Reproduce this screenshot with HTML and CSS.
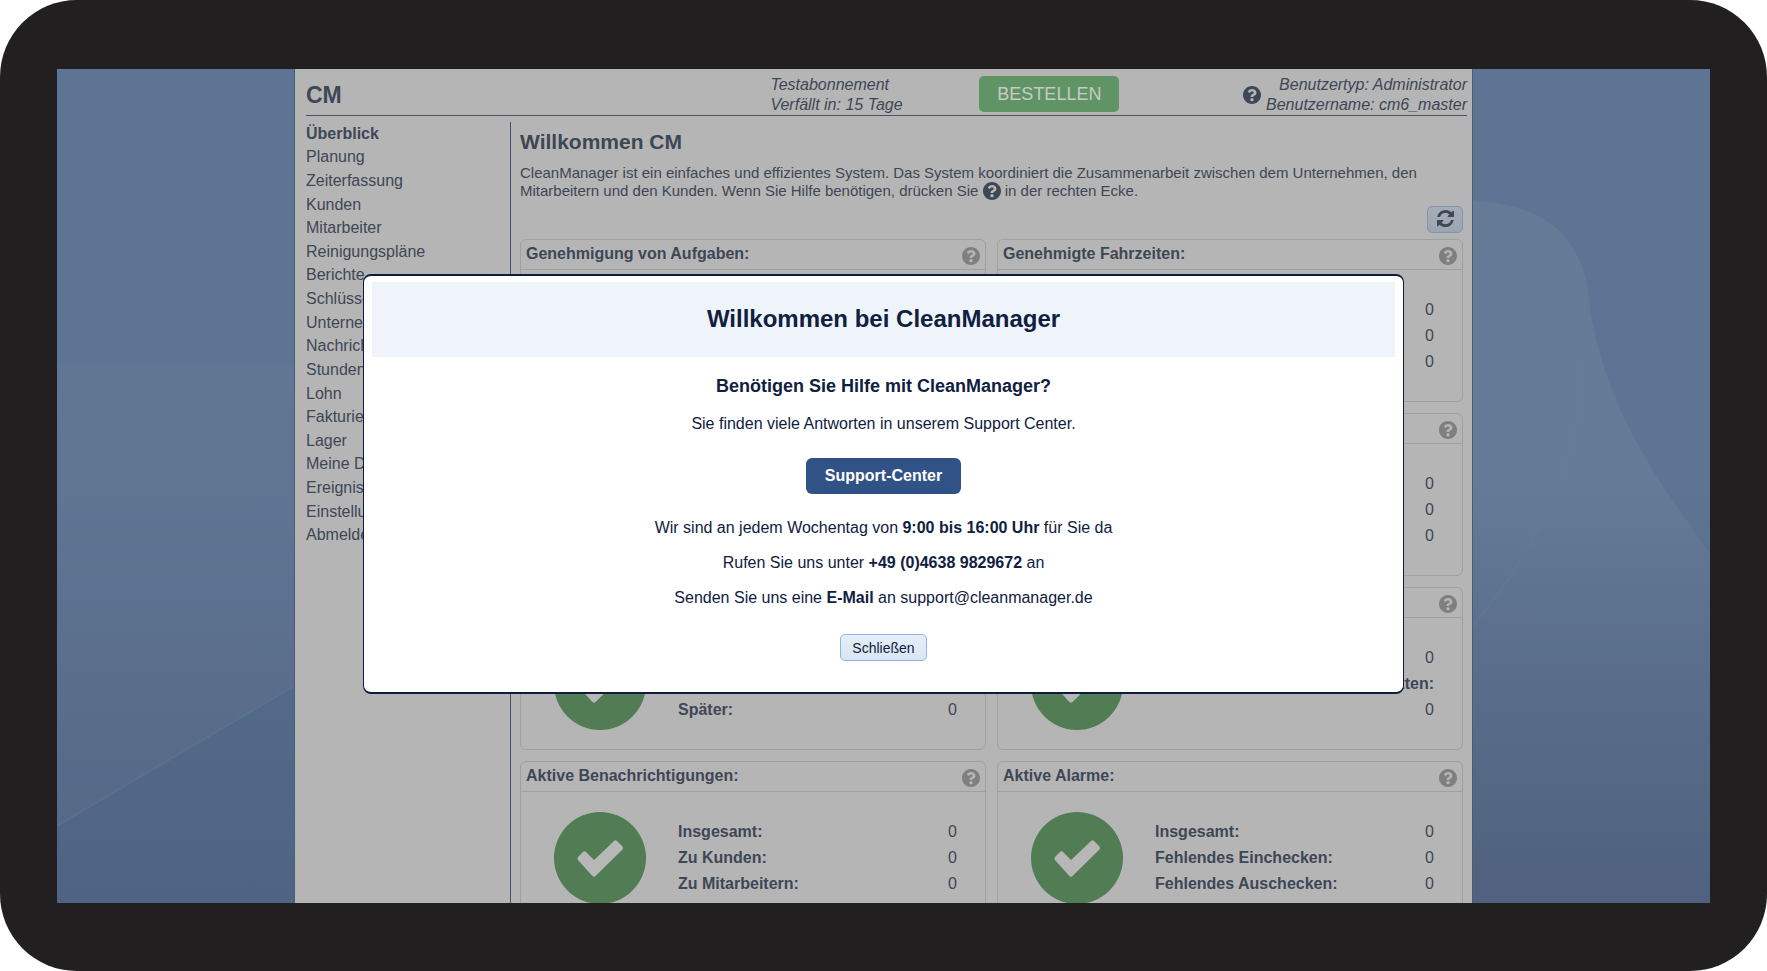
FILE: index.html
```html
<!DOCTYPE html>
<html lang="de">
<head>
    <meta charset="UTF-8">
    <meta name="viewport" content="width=device-width, initial-scale=1.0">
    <title>CleanManager</title>
    <link rel="stylesheet" href="styles.css">
</head>
<body>
    <!-- Icons -->
    <svg class="sprite" aria-hidden="true">
        <symbol id="icon-help" viewBox="8 8 496 496">
            <path d="M504 256c0 136.997-111.043 248-248 248S8 392.997 8 256C8 119.083 119.043 8 256 8s248 111.083 248 248zM262.655 90c-54.497 0-89.255 22.957-116.549 63.758-3.536 5.286-2.353 12.415 2.715 16.258l34.699 26.31c5.205 3.947 12.621 3.008 16.665-2.122 17.864-22.658 30.113-35.797 57.303-35.797 20.429 0 45.698 13.148 45.698 32.958 0 14.976-12.363 22.667-32.534 33.976C247.128 238.528 216 254.941 216 296v4c0 6.627 5.373 12 12 12h56c6.627 0 12-5.373 12-12v-1.333c0-28.462 83.186-29.647 83.186-106.667 0-58.002-60.165-102-116.531-102zM256 338c-25.365 0-46 20.635-46 46 0 25.364 20.635 46 46 46s46-20.636 46-46c0-25.365-20.635-46-46-46z"/>
        </symbol>
        <symbol id="icon-refresh" viewBox="0 0 1536 1536">
            <path d="M1511 928q0 5-1 7-64 268-268 434.5t-478 166.5q-146 0-282.5-55t-243.5-157l-129 129q-19 19-45 19t-45-19-19-45v-448q0-26 19-45t45-19h448q26 0 45 19t19 45-19 45l-137 137q71 66 161 102t187 36q134 0 250-65t186-179q11-17 53-117 8-23 30-23h192q13 0 22.5 9.5t9.5 22.5zm25-800v448q0 26-19 45t-45 19h-448q-26 0-45-19t-19-45 19-45l138-138q-148-137-349-137-134 0-250 65t-186 179q-11 17-53 117-8 23-30 23h-199q-13 0-22.5-9.5t-9.5-22.5v-7q65-268 270-434.5t480-166.5q146 0 284 55.5t245 156.5l130-129q19-19 45-19t45 19 19 45z"/>
        </symbol>
        <symbol id="icon-check" viewBox="0 0 92 92">
            <circle cx="46" cy="46" r="46"/>
            <path d="M26 46.500L30.500 42L40 51.500L61.500 31L66.500 36L40 62Z" fill="#b7b7b7" stroke="#b7b7b7" stroke-width="5" stroke-linejoin="round"/>
        </symbol>
    </svg>

    <div class="device">
        <div class="screen">
            <svg class="wallpaper" viewBox="0 0 1653 833" preserveAspectRatio="none" aria-hidden="true">
                <defs>
                    <linearGradient id="fold" x1="0" y1="0" x2="0" y2="1">
                        <stop offset="0" stop-color="#6d8099" stop-opacity=".55"/>
                        <stop offset=".4" stop-color="#6a7f9a" stop-opacity=".6"/>
                        <stop offset="1" stop-color="#52657f" stop-opacity="0"/>
                    </linearGradient>
                    <linearGradient id="base" x1="0" y1="0" x2="0" y2="1">
                        <stop offset="0" stop-color="#637892" stop-opacity=".5"/>
                        <stop offset="1" stop-color="#5c7090" stop-opacity=".4"/>
                    </linearGradient>
                </defs>
                <path d="M0 296H238V616L0 756Z" fill="url(#base)"/>
                <path d="M0 756L238 616V833H0Z" fill="#506888" fill-opacity=".55"/>
                <path d="M0 756L238 616" stroke="#6c819c" stroke-opacity=".3" stroke-width="2"/>
                <path d="M1400 130C1470 133 1528 150 1533 241C1548 330 1590 400 1653 483V833H1400Z" fill="url(#fold)"/>
                <path d="M1416 556C1480 480 1520 400 1527 290" fill="none" stroke="#71849c" stroke-opacity=".2" stroke-width="2"/>
            </svg>

            <div class="app">
                <header class="topbar">
                    <div class="brand">CM</div>
                    <div class="trial">Testabonnement<br>Verfällt in: 15 Tage</div>
                    <button class="order" type="button">BESTELLEN</button>
                    <div class="user">
                        <svg class="icon"><use href="#icon-help"/></svg>
                        <div>Benutzertyp: Administrator<br>Benutzername: cm6_master</div>
                    </div>
                </header>

                <div class="columns">
                    <nav class="menu">
                        <a class="active" href="#">Überblick</a>
                        <a href="#">Planung</a>
                        <a href="#">Zeiterfassung</a>
                        <a href="#">Kunden</a>
                        <a href="#">Mitarbeiter</a>
                        <a href="#">Reinigungspläne</a>
                        <a href="#">Berichte</a>
                        <a href="#">Schlüssel</a>
                        <a href="#">Unternehmen</a>
                        <a href="#">Nachrichten</a>
                        <a href="#">Stundenzettel</a>
                        <a href="#">Lohn</a>
                        <a href="#">Fakturierung</a>
                        <a href="#">Lager</a>
                        <a href="#">Meine Daten</a>
                        <a href="#">Ereignisse</a>
                        <a href="#">Einstellungen</a>
                        <a href="#">Abmelden</a>
                    </nav>

                    <main class="content">
                        <h1>Willkommen CM</h1>
                        <p class="intro">CleanManager ist ein einfaches und effizientes System. Das System koordiniert die Zusammenarbeit zwischen dem Unternehmen, den Mitarbeitern und den Kunden. Wenn Sie Hilfe benötigen, drücken Sie <svg class="icon"><use href="#icon-help"/></svg> in der rechten Ecke.</p>
                        <div class="toolbar">
                            <button class="refresh" type="button" aria-label="Aktualisieren"><svg><use href="#icon-refresh"/></svg></button>
                        </div>

                        <div class="cards">
                            <section class="card">
                                <h2>Genehmigung von Aufgaben: <svg class="icon"><use href="#icon-help"/></svg></h2>
                                <div class="card-body">
                                    <svg class="check"><use href="#icon-check"/></svg>
                                    <dl>
                                        <div><dt>Heute:</dt><dd>0</dd></div>
                                        <div><dt>Gestern:</dt><dd>0</dd></div>
                                        <div><dt>Früher:</dt><dd>0</dd></div>
                                    </dl>
                                </div>
                            </section>
                            <section class="card">
                                <h2>Genehmigte Fahrzeiten: <svg class="icon"><use href="#icon-help"/></svg></h2>
                                <div class="card-body">
                                    <svg class="check"><use href="#icon-check"/></svg>
                                    <dl>
                                        <div><dt>Heute:</dt><dd>0</dd></div>
                                        <div><dt>Gestern:</dt><dd>0</dd></div>
                                        <div><dt>Früher:</dt><dd>0</dd></div>
                                    </dl>
                                </div>
                            </section>
                            <section class="card">
                                <h2>Aufgaben: <svg class="icon"><use href="#icon-help"/></svg></h2>
                                <div class="card-body">
                                    <svg class="check"><use href="#icon-check"/></svg>
                                    <dl>
                                        <div><dt>Heute:</dt><dd>0</dd></div>
                                        <div><dt>Morgen:</dt><dd>0</dd></div>
                                        <div><dt>Später:</dt><dd>0</dd></div>
                                    </dl>
                                </div>
                            </section>
                            <section class="card">
                                <h2>Abwesenheit: <svg class="icon"><use href="#icon-help"/></svg></h2>
                                <div class="card-body">
                                    <svg class="check"><use href="#icon-check"/></svg>
                                    <dl>
                                        <div><dt>Heute:</dt><dd>0</dd></div>
                                        <div><dt>Morgen:</dt><dd>0</dd></div>
                                        <div><dt>Später:</dt><dd>0</dd></div>
                                    </dl>
                                </div>
                            </section>
                            <section class="card">
                                <h2>Termine: <svg class="icon"><use href="#icon-help"/></svg></h2>
                                <div class="card-body">
                                    <svg class="check"><use href="#icon-check"/></svg>
                                    <dl>
                                        <div><dt>Heute:</dt><dd>0</dd></div>
                                        <div><dt>Morgen:</dt><dd>0</dd></div>
                                        <div><dt>Später:</dt><dd>0</dd></div>
                                    </dl>
                                </div>
                            </section>
                            <section class="card">
                                <h2>Fristen: <svg class="icon"><use href="#icon-help"/></svg></h2>
                                <div class="card-body">
                                    <svg class="check"><use href="#icon-check"/></svg>
                                    <dl>
                                        <div><dt></dt><dd>0</dd></div>
                                        <div class="wide"><dt>Frist überschritten:</dt></div>
                                        <div><dt></dt><dd>0</dd></div>
                                    </dl>
                                </div>
                            </section>
                            <section class="card">
                                <h2>Aktive Benachrichtigungen: <svg class="icon"><use href="#icon-help"/></svg></h2>
                                <div class="card-body">
                                    <svg class="check"><use href="#icon-check"/></svg>
                                    <dl>
                                        <div><dt>Insgesamt:</dt><dd>0</dd></div>
                                        <div><dt>Zu Kunden:</dt><dd>0</dd></div>
                                        <div><dt>Zu Mitarbeitern:</dt><dd>0</dd></div>
                                    </dl>
                                </div>
                            </section>
                            <section class="card">
                                <h2>Aktive Alarme: <svg class="icon"><use href="#icon-help"/></svg></h2>
                                <div class="card-body">
                                    <svg class="check"><use href="#icon-check"/></svg>
                                    <dl>
                                        <div><dt>Insgesamt:</dt><dd>0</dd></div>
                                        <div><dt>Fehlendes Einchecken:</dt><dd>0</dd></div>
                                        <div><dt>Fehlendes Auschecken:</dt><dd>0</dd></div>
                                    </dl>
                                </div>
                            </section>
                        </div>
                    </main>
                </div>
            </div>

            <div class="overlay">
                <div class="modal" role="dialog" aria-labelledby="modal-title">
                    <h2 class="modal-title" id="modal-title">Willkommen bei CleanManager</h2>
                    <div class="modal-body">
                        <h3>Benötigen Sie Hilfe mit CleanManager?</h3>
                        <p>Sie finden viele Antworten in unserem Support Center.</p>
                        <a class="support" href="#">Support-Center</a>
                        <p>Wir sind an jedem Wochentag von <b>9:00 bis 16:00 Uhr</b> für Sie da</p>
                        <p>Rufen Sie uns unter <b>+49 (0)4638 9829672</b> an</p>
                        <p>Senden Sie uns eine <b>E-Mail</b> an support@cleanmanager.de</p>
                        <button class="close" type="button">Schließen</button>
                    </div>
                </div>
            </div>
        </div>
    </div>
</body>
</html>
```

FILE: styles.css
```css
* {
    box-sizing: border-box;
}
body {
    margin: 0;
    background-color: #fff;
    color: #3d4756;
    font-family: "Liberation Sans", Arial, sans-serif;
    font-size: 16px;
    line-height: 20px;
}
h1, h2, h3, p, dl, dd {
    margin: 0;
}
.sprite {
    display: none;
}

/* Tablet */
.device {
    height: 100vh;
    padding: 69px 57px 68px;
    background-color: #221f20;
    border-radius: 77px;
}
.screen {
    position: relative;
    height: 100%;
    overflow: hidden;
    background: linear-gradient(to bottom, #5d7494, #5e7493 50%, #4f617e);
}
.wallpaper {
    position: absolute;
    width: 100%;
    height: 100%;
}

/* App */
.app {
    position: relative;
    display: flex;
    flex-direction: column;
    max-width: 1179px;
    height: 100%;
    margin: 0 auto;
    padding: 0 5px 0 11px;
    background-color: #b5b5b5;
    border-left: 1px solid #4d5b70;
    border-right: 1px solid #4d5b70;
}
.topbar {
    display: grid;
    grid-template-columns: 40% 18% 1fr auto;
    align-items: center;
    height: 47px;
    padding-top: 6px;
    border-bottom: 1px solid #4a5466;
}
.brand {
    font-size: 23px;
    font-weight: bold;
}
.trial, .user {
    font-style: italic;
}
.order {
    justify-self: start;
    height: 36px;
    margin-bottom: 2px;
    padding: 0 18px;
    border: none;
    border-radius: 5px;
    background-color: #619465;
    color: #c5cbc5;
    font-family: inherit;
    font-size: 18px;
}
.user {
    display: flex;
    align-items: center;
    gap: 5px;
    text-align: right;
}
.icon {
    width: 18px;
    height: 18px;
    fill: currentColor;
}
.columns {
    flex: 1;
    display: flex;
    min-height: 0;
    margin-top: 6px;
}
.menu {
    display: grid;
    grid-auto-rows: 1fr;
    align-self: flex-start;
    align-items: center;
    flex: 0 0 204px;
    height: 425px;
}
.menu a {
    color: inherit;
    text-decoration: none;
}
.menu .active {
    font-weight: bold;
}
.content {
    flex: 1;
    padding: 8px 4px 0 9px;
    border-left: 1px solid #4a5466;
}
h1 {
    font-size: 21px;
    line-height: 24px;
}
.intro {
    margin-top: 10px;
    font-size: 15px;
    line-height: 18px;
}
.intro .icon {
    vertical-align: -4px;
}
.toolbar {
    display: flex;
    justify-content: flex-end;
    margin: 6px 0;
}
.refresh {
    display: flex;
    align-items: center;
    justify-content: center;
    width: 36px;
    height: 27px;
    padding: 0 0 2px;
    border: 1px solid #7f93b2;
    border-radius: 5px;
    background: linear-gradient(#a6adb6, #9ba5b1);
}
.refresh svg {
    width: 17px;
    height: 17px;
    fill: #3d4756;
}

/* Cards */
.cards {
    display: grid;
    grid-template-columns: 1fr 1fr;
    grid-auto-rows: 163px;
    gap: 11px;
}
.card {
    display: flex;
    flex-direction: column;
    border: 1px solid #a0a0a0;
    border-radius: 6px;
}
.card h2 {
    display: flex;
    justify-content: space-between;
    height: 30px;
    padding: 4px 5px 0;
    border-bottom: 1px solid #a0a0a0;
    font-size: 16px;
}
.card h2 .icon {
    margin-top: 3px;
    fill: #7f7f7f;
}
.card-body {
    flex: 1;
    display: flex;
    align-items: center;
    gap: 32px;
    padding: 0 28px 0 33px;
}
.check {
    width: 92px;
    height: 92px;
    fill: #527c54;
}
.card dl {
    flex: 1;
}
.card dl div {
    display: flex;
    justify-content: space-between;
    line-height: 26px;
}
.card .wide {
    justify-content: flex-end;
}
dt {
    font-weight: bold;
}

/* Dialog */
.overlay {
    position: absolute;
    inset: 0;
    display: flex;
    align-items: center;
    justify-content: center;
    padding-bottom: 4px;
}
.modal {
    width: 63%;
    padding: 6px 8px 31px;
    background-color: #fff;
    border: 1px solid #0d1e3d;
    border-width: 2px 1px;
    border-radius: 8px;
    color: #10203f;
    text-align: center;
}
.modal-title {
    padding: 24px 0 26px;
    background-color: #eff4fb;
    font-size: 24px;
    line-height: 25px;
}
.modal-body {
    display: flex;
    flex-direction: column;
    align-items: center;
}
.modal-body h3 {
    margin: 19px 0 18px;
    font-size: 18px;
}
.modal-body p {
    margin-bottom: 15px;
}
.support {
    margin: 9px 0 24px;
    padding: 8px 19px;
    background-color: #305286;
    border-radius: 6px;
    color: #fff;
    font-weight: bold;
    text-decoration: none;
}
.close {
    height: 27px;
    margin-top: 11px;
    padding: 0 11px;
    border: 1px solid #93b1e4;
    border-radius: 5px;
    background: linear-gradient(#e6eef8, #d8e6f4);
    color: #10203f;
    font-family: inherit;
    font-size: 14px;
}
```
